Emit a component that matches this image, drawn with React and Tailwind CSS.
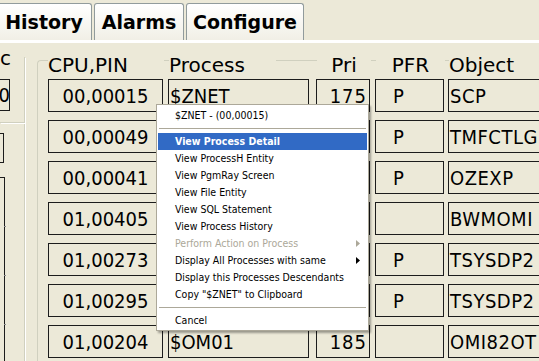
const rows = [
  { cpu: "00,00015", proc: "$ZNET", pri: "175", pfr: "P", obj: "SCP" },
  { cpu: "00,00049", proc: "", pri: "", pfr: "P", obj: "TMFCTLG" },
  { cpu: "00,00041", proc: "", pri: "", pfr: "P", obj: "OZEXP" },
  { cpu: "01,00405", proc: "", pri: "", pfr: "", obj: "BWMOMI" },
  { cpu: "01,00273", proc: "", pri: "", pfr: "P", obj: "TSYSDP2" },
  { cpu: "01,00295", proc: "", pri: "", pfr: "P", obj: "TSYSDP2" },
  { cpu: "01,00204", proc: "$OM01", pri: "185", pfr: "", obj: "OMI82OT" },
];

const menu = [
  { label: "$ZNET - (00,00015)" },
  { sep: true },
  { label: "View Process Detail", active: true },
  { label: "View ProcessH Entity" },
  { label: "View PgmRay Screen" },
  { label: "View File Entity" },
  { label: "View SQL Statement" },
  { label: "View Process History" },
  { label: "Perform Action on Process", disabled: true, sub: true },
  { label: "Display All Processes with same", sub: true },
  { label: "Display this Processes Descendants" },
  { label: "Copy \"$ZNET\" to Clipboard" },
  { sep: true },
  { label: "Cancel" },
];

const FONT = { fontFamily: '"DejaVu Sans Condensed", "DejaVu Sans", sans-serif' };

function Tab({ label, w }) {
  return (
    <div
      className={`h-[37px] ${w} shrink-0 rounded-t-[3px] border border-b-0 border-[#919B9C] bg-gradient-to-b from-white to-[#F1EFE6] flex items-center justify-center text-[19px] font-bold text-black font-stretch-normal`}
      style={{ fontFamily: '"DejaVu Sans", sans-serif' }}
    >
      {label}
    </div>
  );
}

function Box({ w, className = "", children }) {
  return (
    <div className={`h-[33px] ${w} shrink-0 border border-[#1c1c1c] flex items-center ${className}`}>
      {children}
    </div>
  );
}

export default function App() {
  return (
    <div
      className="relative w-[539px] h-[361px] overflow-hidden bg-[#ECE9D8] text-black font-stretch-condensed"
      style={FONT}
    >
      {/* tabs */}
      <div className="flex items-end gap-[2px] h-[40px] -ml-[4px]">
        <Tab label="History" w="w-[96px]" />
        <Tab label="Alarms" w="w-[90px]" />
        <Tab label="Configure" w="w-[118px]" />
      </div>
      <div className="h-[3px] bg-white" />

      <div className="flex">
        {/* left edge, clipped panel */}
        <div className="w-[25px] shrink-0 flex flex-col">
          <div className="mt-[14px] h-[66px] border-r border-b border-[#D0D0BF] shadow-[1px_1px_0_#fff] relative">
            <div className="absolute -top-[9px] left-0 bg-[#ECE9D8] text-[20px] leading-[20px] pr-[2px] font-stretch-normal" style={{ fontFamily: '"DejaVu Sans", sans-serif' }}>c</div>
            <div className="mt-[22px] w-[10px] h-[32px] border border-[#1c1c1c] border-l-0 flex items-center justify-end text-[20px] overflow-hidden">
              <span className="-mr-[1px]">0</span>
            </div>
          </div>
          <div className="flex-1 border-r border-[#D0D0BF] shadow-[1px_0_0_#fff]">
            <div className="mt-[10px] w-[4px] h-[30px] border-r border-y border-[#1c1c1c]" />
            <div className="mt-[14px] w-[5px] h-[200px] border-r border-t border-[#1c1c1c] flex flex-col">
              <div className="mt-[48px] ml-[4px] w-[2px] h-px bg-[#888]" />
              <div className="mt-[48px] ml-[4px] w-[2px] h-px bg-[#888]" />
              <div className="mt-[48px] ml-[4px] w-[2px] h-px bg-[#888]" />
            </div>
          </div>
        </div>

        {/* table group box */}
        <div className="ml-[12px] mt-[17px] flex-1 h-[320px] border-l border-t border-[#D0D0BF] rounded-tl-[4px] pl-[10px]">
          <div
            className="-mt-[8px] h-[24px] flex text-[20px] leading-[24px] font-stretch-normal"
            style={{ fontFamily: '"DejaVu Sans", sans-serif' }}
          >
            <div className="w-[116px] shrink-0 bg-[#ECE9D8]">CPU,PIN</div>
            <div className="w-[5px] shrink-0" />
            <div className="w-[107px] shrink-0 bg-[#ECE9D8]">Process</div>
            <div className="w-[41px] shrink-0" />
            <div className="w-[54px] shrink-0 bg-[#ECE9D8] text-center">Pri</div>
            <div className="w-[5px] shrink-0" />
            <div className="w-[69px] shrink-0 bg-[#ECE9D8] text-center">PFR</div>
            <div className="w-[4px] shrink-0" />
            <div className="flex-1 bg-[#ECE9D8]">Object</div>
          </div>

          <div className="mt-[2px] flex flex-col gap-[8px] text-[20px]">
            {rows.map((r, i) => (
              <div key={i} className="flex">
                <Box w="w-[115px]" className="justify-center">{r.cpu}</Box>
                <div className="w-[5px] shrink-0" />
                <Box w="w-[141px]" className="pl-[1px]">{r.proc}</Box>
                <div className="w-[7px] shrink-0" />
                <Box w="w-[54px]" className="justify-end pr-[2px] tracking-[1px]">{r.pri}</Box>
                <div className="w-[5px] shrink-0" />
                <Box w="w-[69px]" className="pl-[17px]">{r.pfr}</Box>
                <div className="w-[4px] shrink-0" />
                <Box w="w-[120px]" className="pl-[1px] tracking-[0.5px]">{r.obj}</Box>
              </div>
            ))}
          </div>
        </div>
      </div>

      {/* context menu */}
      <div className="absolute left-[156px] top-[104px] w-[213px] bg-white border border-[#ACA899] shadow-[2px_2px_2px_rgba(0,0,0,0.35)] pt-[2px] pb-[1px] px-[1px] text-[10.5px] leading-[17px]">
        {menu.map((m, i) =>
          m.sep ? (
            <div key={i} className="h-[9px] flex flex-col justify-center px-[1px]">
              <div className="h-px bg-[#ACA899]" />
              <div className="h-px bg-white" />
            </div>
          ) : (
            <div
              key={i}
              className={`relative h-[17px] pl-[17px] whitespace-nowrap ${
                m.active
                  ? "bg-[#316AC5] text-white font-bold"
                  : m.disabled
                  ? "text-[#ACA899]"
                  : "text-black"
              }`}
            >
              {m.label}
              {m.sub && (
                <svg
                  className="absolute right-[7px] top-[5px]"
                  width="4"
                  height="7"
                  viewBox="0 0 4 7"
                >
                  <path d="M0 0 L4 3.5 L0 7 Z" fill={m.disabled ? "#ACA899" : "#000"} />
                </svg>
              )}
            </div>
          )
        )}
      </div>
    </div>
  );
}
